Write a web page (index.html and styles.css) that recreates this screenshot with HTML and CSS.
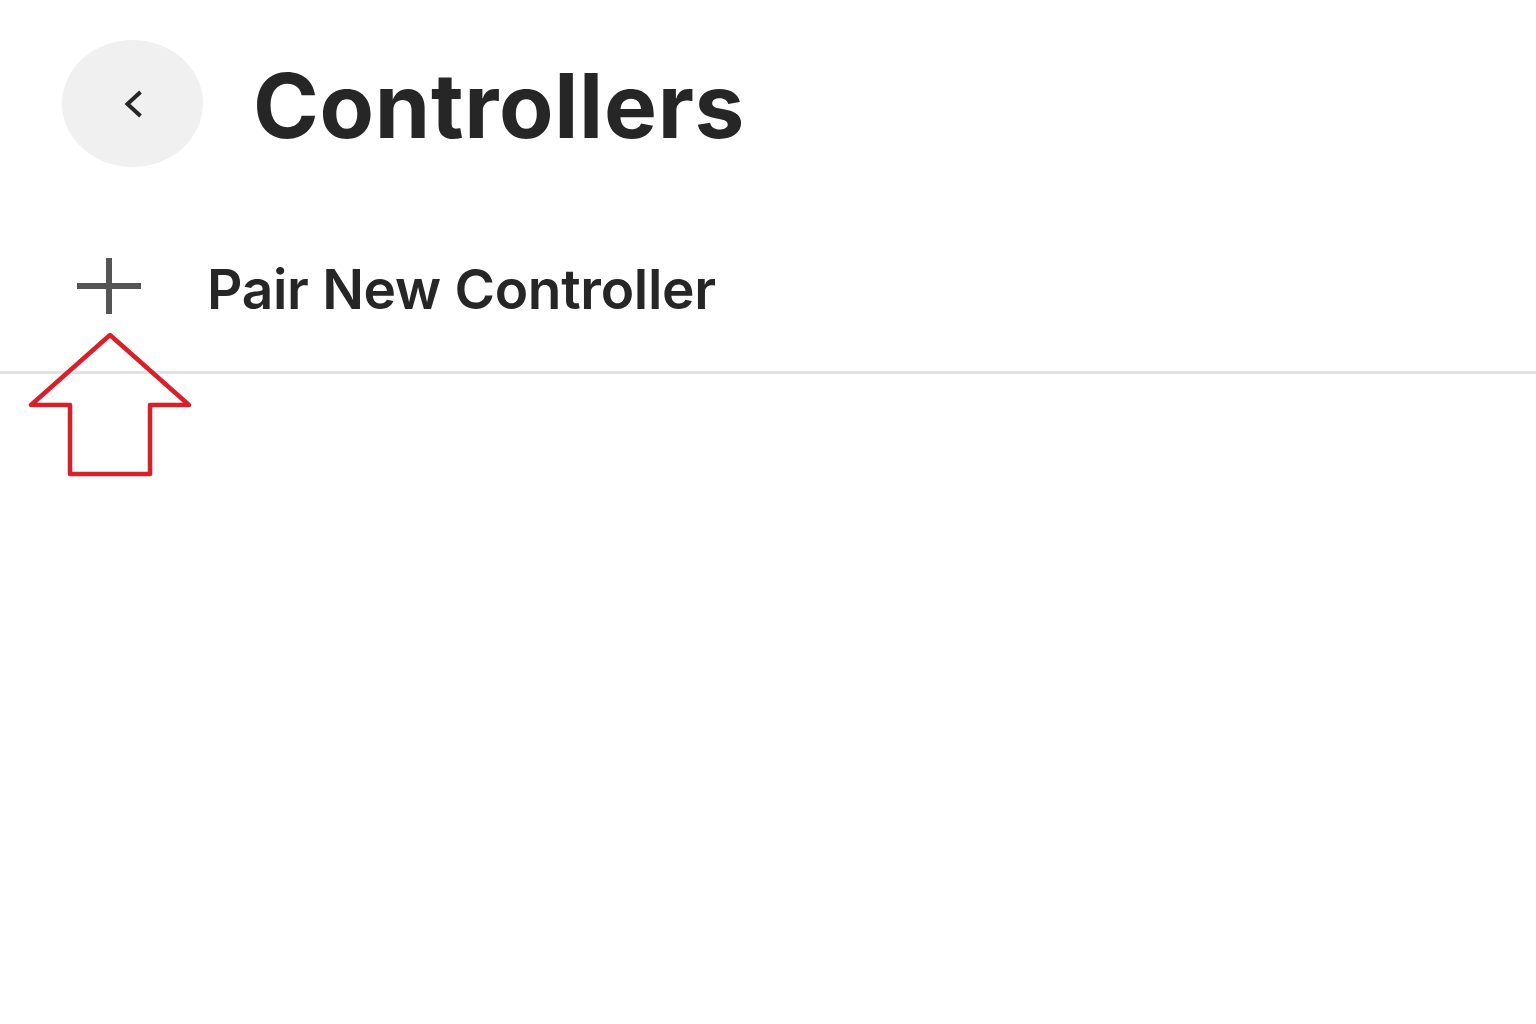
FILE: index.html
```html
<!DOCTYPE html>
<html lang="en">
<head>
<meta charset="utf-8">
<title>Controllers</title>
<link rel="stylesheet" href="styles.css">
</head>
<body>
<div class="screen">
  <header class="topbar">
    <button class="back-btn" aria-label="Back">
      <svg class="back-icon" viewBox="0 0 24 30" width="24" height="30">
        <path d="M19.5 3 L6.5 15 L19.5 27" fill="none" stroke="#262626" stroke-width="4" stroke-linecap="butt" stroke-linejoin="miter"/>
      </svg>
    </button>
    <h1 class="title">Controllers</h1>
  </header>

  <div class="list">
    <div class="list-row">
      <span class="row-icon">
        <svg viewBox="0 0 64 56" width="64" height="56">
          <path d="M32 0 V56 M0 28 H64" fill="none" stroke="#555555" stroke-width="6"/>
        </svg>
      </span>
      <span class="row-label">Pair New Controller</span>
      <svg class="callout-arrow" viewBox="0 0 170 150" width="170" height="150">
        <path d="M85 5 L6 75 L45 75 L45 144 L125 144 L125 75 L164 75 Z" fill="none" stroke="#d9202a" stroke-width="4.5" stroke-linejoin="round"/>
      </svg>
    </div>
  </div>
</div>
</body>
</html>
```

FILE: styles.css
```css
html, body {
  margin: 0;
  padding: 0;
  background: #ffffff;
}

.screen {
  width: 1536px;
  height: 1024px;
  font-family: Inter, "Open Sans", "Liberation Sans", sans-serif;
  color: #262626;
}

.topbar {
  display: flex;
  align-items: center;
  gap: 50px;
  padding: 40px 0 0 62px;
  height: 127px;
}

.back-btn {
  width: 141px;
  height: 127px;
  border-radius: 50%;
  border: none;
  background: #f0f0f0;
  display: flex;
  align-items: center;
  justify-content: center;
  padding: 0;
}

.back-icon {
  display: block;
}

.title {
  margin: 0;
  font-size: 89px;
  font-weight: 700;
  letter-spacing: 0.7px;
  line-height: 1;
  transform: translateY(2px);
}

.list {
  margin-top: 91px;
}

.list-row {
  position: relative;
  display: flex;
  align-items: flex-start;
  gap: 66px;
  height: 116px;
  padding-left: 77px;
  border-bottom: 3px solid #e2e2e2;
  box-sizing: border-box;
}

.row-icon {
  display: block;
  width: 64px;
  height: 56px;
}

.row-icon svg {
  display: block;
}

.row-label {
  font-size: 55px;
  font-weight: 600;
  line-height: 1;
  margin-top: 4px;
  letter-spacing: -0.3px;
}

.callout-arrow {
  position: absolute;
  left: 25px;
  top: 72px;
}
```
